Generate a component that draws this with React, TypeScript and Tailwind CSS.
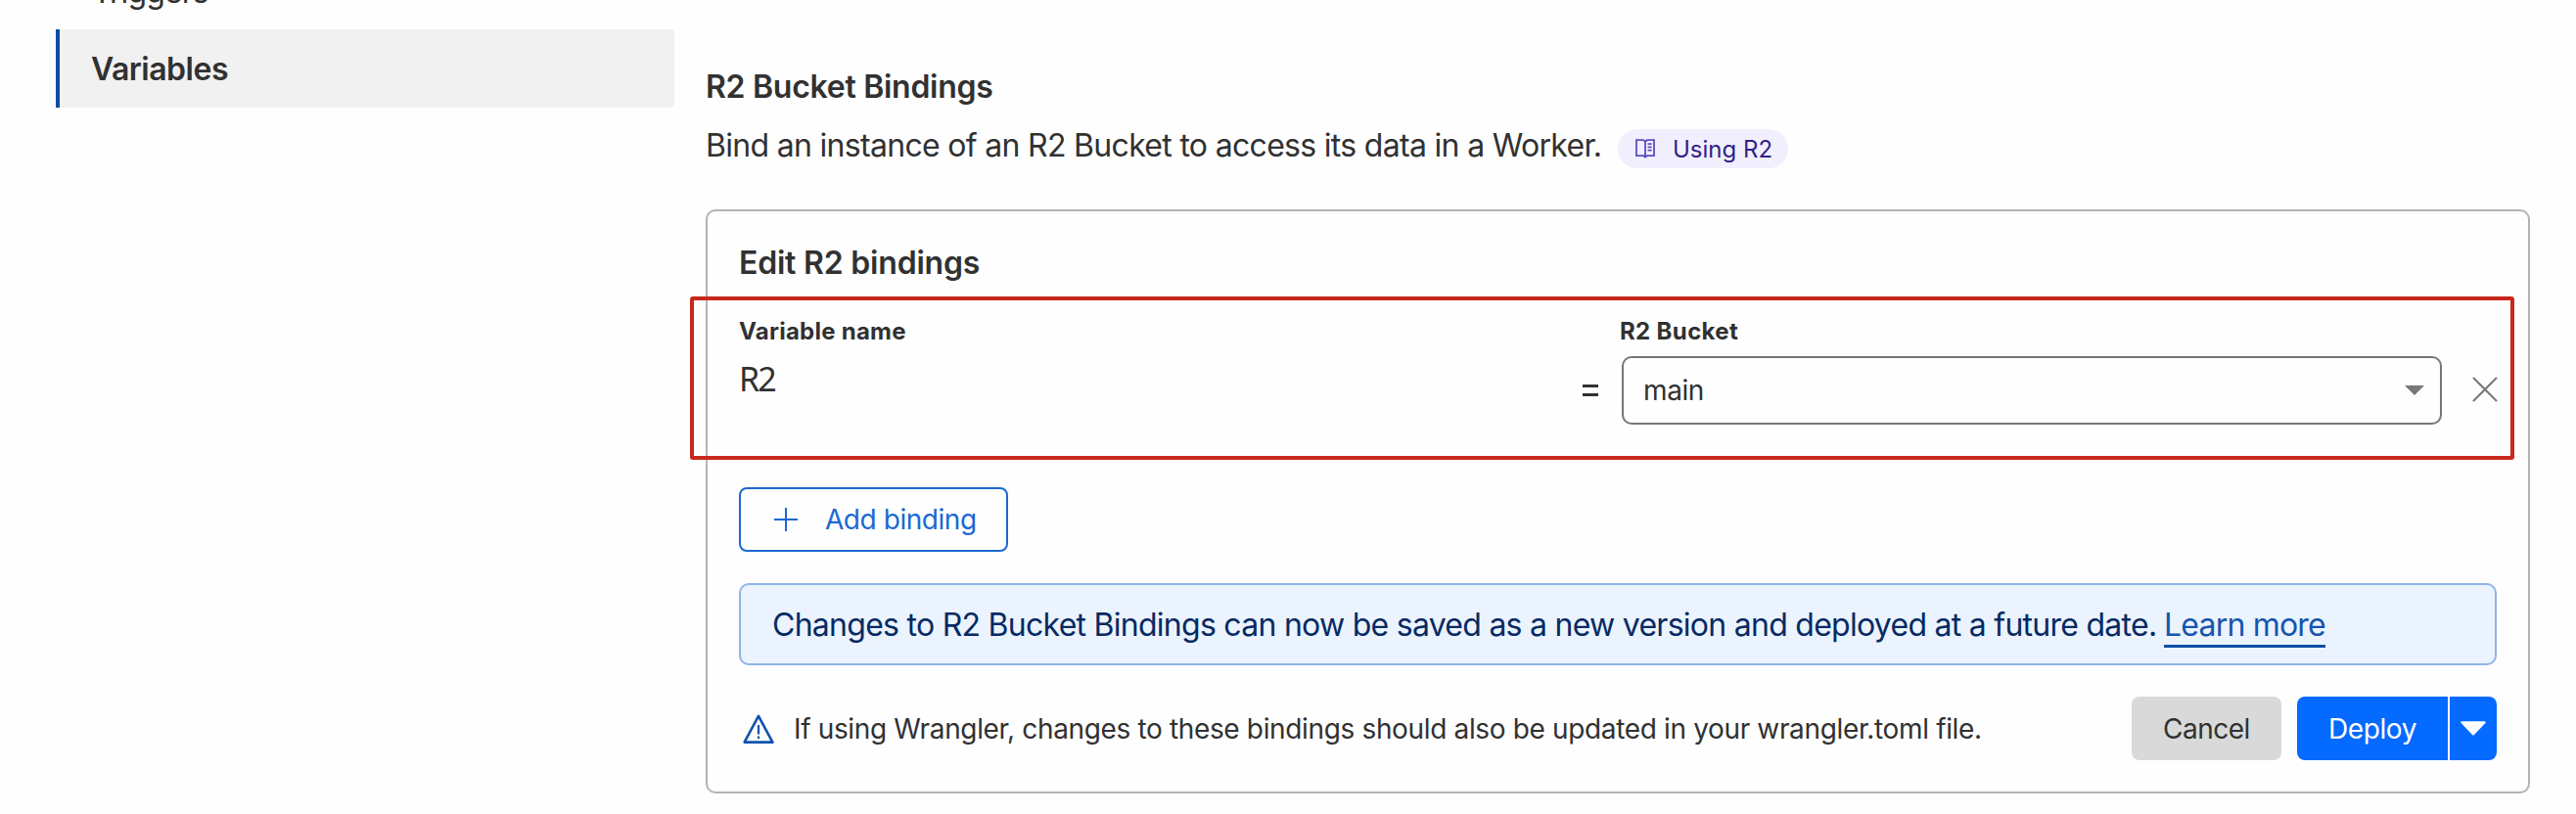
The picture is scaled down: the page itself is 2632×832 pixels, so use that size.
import React from "react";

function BookIcon() {
  return (
    <svg width="20" height="20" viewBox="0 0 20 20" fill="none" stroke="#5a4fc0" strokeWidth="1.8" className="shrink-0">
      <path d="M1 1.2h7.2L10 2.6l1.8-1.4H19v16h-7.2L10 18.6l-1.8-1.4H1zM10 2.6v16M12.6 5.2h4M12.6 8.4h4M12.6 11.6h4" />
    </svg>
  );
}

function WarningIcon() {
  return (
    <svg width="32" height="30" viewBox="0 0 32 30" fill="none" stroke="#1152b0" strokeWidth="2.6" strokeLinejoin="round" className="shrink-0">
      <path d="M16 1.8L30.4 28.6H1.6z" />
      <path d="M16 11v9.5M16 22.5v2.6" strokeWidth="2.2" />
    </svg>
  );
}

export default function App() {
  return (
    <div className="relative flex h-[832px] w-[2632px] overflow-hidden bg-[#fefefe] font-['Inter',sans-serif] text-[32px] leading-[40px] text-[#313131]">
      <aside className="w-[689px] shrink-0 pl-[57px]">
        <div className="flex h-[30px] items-end pb-[18px] pl-[37px]">
          <span className="tracking-[-0.9px]">Triggers</span>
        </div>
        <div className="flex h-20 items-center rounded-r-sm border-l-4 border-[#0b4ea2] bg-[#f1f1f1] pt-[2px] pl-8 font-semibold">
          <span className="tracking-[-0.5px]">Variables</span>
        </div>
      </aside>

      <main className="ml-8 w-[1864px] pt-[69px]">
        <h2 className="font-semibold"><span className="tracking-[-0.28px]">R2 Bucket Bindings</span></h2>
        <div className="mt-[20px] flex items-start">
          <p className="w-[932px] whitespace-nowrap"><span className="tracking-[-0.69px]">Bind an instance of an R2 Bucket to access its data in a Worker.</span></p>
          <a className="mt-[3px] flex h-10 w-[174px] items-center rounded-full bg-[#f1effd] pl-[18px] text-2xl text-[#2f1f8a]">
            <BookIcon />
            <span className="mt-[2px] ml-[18px] whitespace-nowrap">Using R2</span>
          </a>
        </div>

        <section className="mt-[42px] h-[597px] rounded-[10px] border-2 border-[#b3b3b3] px-8 pt-[33px]">
          <h3 className="font-semibold"><span className="tracking-[-0.2px]">Edit R2 bindings</span></h3>

          <div className="mt-[35px] flex h-[110px]">
            <div className="w-[862px] shrink-0">
              <div className="text-2xl leading-[30px] font-bold"><span className="tracking-[0.25px]">Variable name</span></div>
              <div className="mt-[13px] font-['Noto_Sans',sans-serif] text-[34px]"><span className="tracking-[-2px]">R2</span></div>
            </div>
            <div className="flex w-[40px] shrink-0 flex-col justify-center gap-[6px] pt-[40px]">
              <div className="h-[3px] w-4 bg-[#313131]" />
              <div className="h-[3px] w-4 bg-[#313131]" />
            </div>
            <div className="w-[838px] shrink-0">
              <div className="-ml-[2px] text-2xl leading-[30px] font-bold"><span className="tracking-[0.35px]">R2 Bucket</span></div>
              <div className="mt-[10px] flex h-[70px] items-center justify-between rounded-[10px] border-2 border-[#777] pr-4 pl-5 text-[28px]">
                <span className="tracking-[-0.4px]">main</span>
                <svg width="20" height="10" viewBox="0 0 20 10" fill="#777"><path d="M0 0h20L10 10z" /></svg>
              </div>
            </div>
            <svg width="26" height="26" viewBox="0 0 26 26" fill="none" stroke="#777" strokeWidth="2" strokeLinecap="round" className="mt-[61px] ml-[31px] shrink-0">
              <path d="M1.5 1.5l23 23M24.5 1.5l-23 23" />
            </svg>
          </div>

          <button className="mt-[64px] flex h-[66px] w-[275px] items-center rounded-lg border-2 border-[#1b69cf] pl-[34px] text-[28px] text-[#1b69d3]">
            <svg width="24" height="24" viewBox="0 0 24 24" stroke="currentColor" strokeWidth="2"><path d="M12 0v24M0 12h24" /></svg>
            <span className="ml-[28px] tracking-[-0.45px] whitespace-nowrap">Add binding</span>
          </button>

          <div className="mt-8 flex h-[84px] items-center rounded-[10px] border-2 border-[#90b4e8] bg-[#ebf3fe] pl-8 whitespace-nowrap text-[#062a63]">
            <p className="mt-[2px] w-[1422px]"><span className="tracking-[-0.73px]">Changes to R2 Bucket Bindings can now be saved as a new version and deployed at a future date.</span></p>
            <a className="mt-[4px] h-[43px] border-b-[3px] border-[#0f4fa6] text-[#1655ad]"><span className="tracking-[-0.8px]">Learn more</span></a>
          </div>

          <div className="mt-8 flex h-[65px] items-center text-[28px]">
            <span className="ml-1 shrink-0"><WarningIcon /></span>
            <p className="mt-px ml-5 w-[1367px] shrink-0 whitespace-nowrap"><span className="tracking-[-0.35px]">If using Wrangler, changes to these bindings should also be updated in your wrangler.toml file.</span></p>
            <button className="h-[65px] w-[153px] shrink-0 rounded-lg bg-[#d9d9d9]"><span className="tracking-[-0.5px]">Cancel</span></button>
            <div className="ml-4 flex h-[65px] w-[204px] shrink-0 gap-[2px] text-white">
              <button className="w-[154px] rounded-l-lg bg-[#056aff]"><span className="tracking-[-0.4px]">Deploy</span></button>
              <button className="flex w-12 items-center justify-center rounded-r-lg bg-[#056aff]">
                <svg width="26" height="15" viewBox="0 0 26 15" fill="white" stroke="white" strokeWidth="2" strokeLinejoin="round"><path d="M1.3 1.2h23.4L13 13.6z" /></svg>
              </button>
            </div>
          </div>
        </section>
      </main>

      <div className="absolute top-[303px] left-[705px] h-[167px] w-[1864px] rounded-[3px] border-4 border-[#c8291c]" />
    </div>
  );
}
